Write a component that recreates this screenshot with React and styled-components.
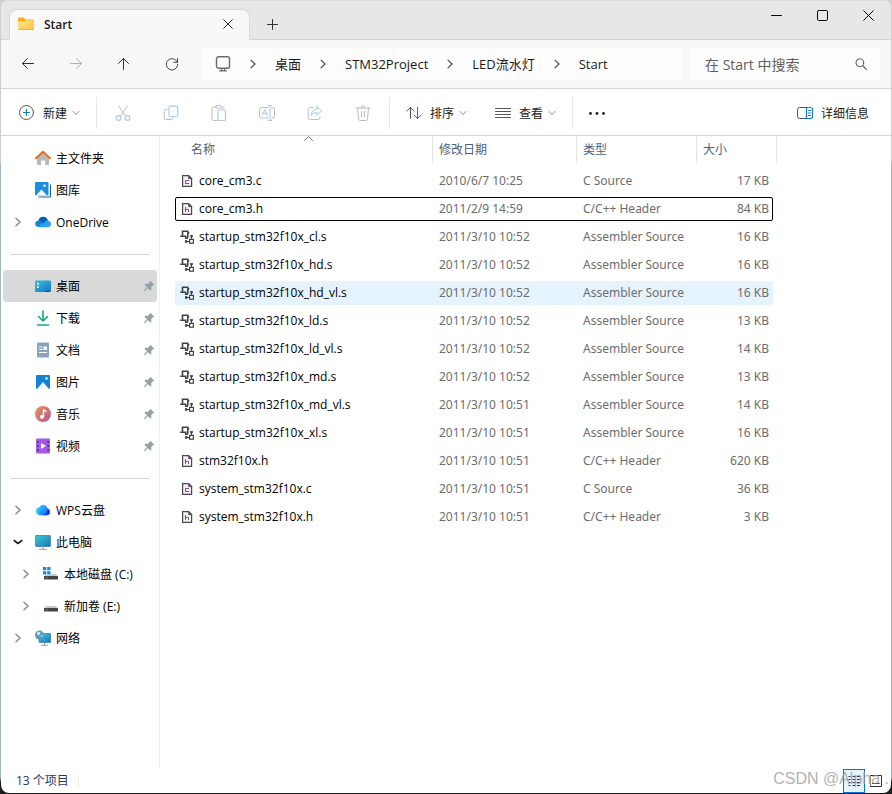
import React, { useState } from "react";
import styled, { createGlobalStyle } from "styled-components";

const files = [
    { name: "core_cm3.c", date: "2010/6/7 10:25", kind: "c", size: "17 KB" },
    { name: "core_cm3.h", date: "2011/2/9 14:59", kind: "h", size: "84 KB" },
    { name: "startup_stm32f10x_cl.s", date: "2011/3/10 10:52", kind: "s", size: "16 KB" },
    { name: "startup_stm32f10x_hd.s", date: "2011/3/10 10:52", kind: "s", size: "16 KB" },
    { name: "startup_stm32f10x_hd_vl.s", date: "2011/3/10 10:52", kind: "s", size: "16 KB" },
    { name: "startup_stm32f10x_ld.s", date: "2011/3/10 10:52", kind: "s", size: "13 KB" },
    { name: "startup_stm32f10x_ld_vl.s", date: "2011/3/10 10:52", kind: "s", size: "14 KB" },
    { name: "startup_stm32f10x_md.s", date: "2011/3/10 10:52", kind: "s", size: "13 KB" },
    { name: "startup_stm32f10x_md_vl.s", date: "2011/3/10 10:51", kind: "s", size: "14 KB" },
    { name: "startup_stm32f10x_xl.s", date: "2011/3/10 10:51", kind: "s", size: "16 KB" },
    { name: "stm32f10x.h", date: "2011/3/10 10:51", kind: "h", size: "620 KB" },
    { name: "system_stm32f10x.c", date: "2011/3/10 10:51", kind: "c", size: "36 KB" },
    { name: "system_stm32f10x.h", date: "2011/3/10 10:51", kind: "h", size: "3 KB" },
];

const kinds = {
    c: "C Source",
    h: "C/C++ Header",
    s: "Assembler Source",
};

/* ---------- icons ---------- */

const Icon = ({ size = 16, color = "#4a4a4a", children }) => (
    <svg
        width={size}
        height={size}
        viewBox={`0 0 ${size} ${size}`}
        fill="none"
        stroke={color}
        strokeLinecap="round"
        strokeLinejoin="round"
        aria-hidden="true"
    >
        {children}
    </svg>
);

const FolderIcon = () => (
    <Icon color="none">
        <defs>
            <linearGradient id="folder" x1="0" y1="0" x2="1" y2="1">
                <stop offset="0" stopColor="#ffe49b" />
                <stop offset="1" stopColor="#fcc638" />
            </linearGradient>
        </defs>
        <path d="M0 3q0-1.500 1.500-1.500h4l2 2h7q1.500 0 1.500 1.500v4H0z" fill="#f2ae18" />
        <path d="M0 5.500h6.500l1.500-1.300h6.800q1.200 0 1.200 1.200v7.400q0 1.200-1.200 1.200H1.200Q0 14 0 12.800z" fill="url(#folder)" />
        <path d="M0.500 13.500h15" stroke="#edb02a" strokeWidth="0.800" />
    </Icon>
);

const CloseIcon = ({ size = 10, color = "#333" }) => (
    <Icon size={size} color={color}>
        <path d={`M0.700 0.700L${size - 0.7} ${size - 0.7}M${size - 0.7} 0.700L0.700 ${size - 0.7}`} />
    </Icon>
);

const PlusIcon = () => (
    <Icon size={11} color="#333">
        <path d="M5.500 0.500v10M0.500 5.500h10" />
    </Icon>
);

const MinimizeIcon = () => (
    <Icon size={11} color="#000">
        <path d="M0.500 5.500h10" />
    </Icon>
);

const MaximizeIcon = () => (
    <Icon size={11} color="#000">
        <rect x="0.500" y="0.500" width="10" height="10" rx="1.200" />
    </Icon>
);

const BackIcon = () => (
    <Icon color="#333">
        <path d="M13.500 7.500H2.500M7.500 2.500l-5 5 5 5" />
    </Icon>
);

const ForwardIcon = () => (
    <Icon color="#b0b0b0">
        <path d="M2.500 7.500h11M8.500 2.500l5 5-5 5" />
    </Icon>
);

const UpIcon = () => (
    <Icon color="#333">
        <path d="M7.500 13.500v-11M2.500 7.500l5-5 5 5" />
    </Icon>
);

const RefreshIcon = () => (
    <Icon color="#444">
        <path d="M13.300 6.200A5.700 5.700 0 1 0 13.700 8.500M13.500 2.500v3.800H9.800" />
    </Icon>
);

const MonitorIcon = () => (
    <Icon color="#6a6a6a">
        <rect x="1.500" y="0.800" width="13" height="11.400" rx="2" strokeWidth="1.400" />
        <path d="M6.500 12.500v2.200M9.500 12.500v2.200M4.500 14.800h7" strokeWidth="1.200" />
    </Icon>
);

const ChevronRight = ({ color = "#444", width = 1.1 }) => (
    <Icon size={10} color={color}>
        <path d="M3 1.200L7 5l-4 3.800" strokeWidth={width} />
    </Icon>
);

const ChevronDown = ({ size = 8, color = "#8a8a8a", width = 1 }) => (
    <Icon size={size} color={color}>
        <path d={`M1.200 ${size / 2 - 1.5}L${size / 2} ${size / 2 + 1.5}L${size - 1.2} ${size / 2 - 1.5}`} strokeWidth={width} />
    </Icon>
);

const SearchIcon = () => (
    <Icon size={12} color="#555">
        <circle cx="4.800" cy="4.800" r="3.900" />
        <path d="M7.700 7.700l3.600 3.600" strokeWidth="1.200" />
    </Icon>
);

const NewIcon = () => (
    <Icon color="#555">
        <circle cx="7.500" cy="7.500" r="7" />
        <path d="M7.500 4.500v6M4.500 7.500h6" stroke="#0f78d4" strokeWidth="1.200" />
    </Icon>
);

const CutIcon = () => (
    <Icon color="#bdbdbd">
        <path d="M3.500 0.800L10 10.500M12.500 0.800L6 10.500" />
        <circle cx="3.500" cy="13" r="2.300" stroke="#a5cbee" strokeWidth="1.200" />
        <circle cx="12.500" cy="13" r="2.300" stroke="#a5cbee" strokeWidth="1.200" />
    </Icon>
);

const CopyIcon = () => (
    <Icon color="#bdbdbd">
        <path d="M4 4.500H3q-1.800 0-1.800 1.800v6.400q0 1.800 1.800 1.800h5q1.800 0 1.800-1.800" />
        <rect x="6" y="1.200" width="8.800" height="10.300" rx="1.800" stroke="#a5cbee" strokeWidth="1.200" />
    </Icon>
);

const PasteIcon = () => (
    <Icon color="#bdbdbd">
        <path d="M5 2H2.500Q1 2 1 3.500v10.500q0 1.500 1.500 1.500H6M10.500 2h1q1.500 0 1.500 1.500V4" />
        <rect x="4.500" y="0.600" width="6" height="2.600" rx="1.200" />
        <rect x="7" y="5" width="7.500" height="10.500" rx="1.200" stroke="#a5cbee" strokeWidth="1.200" />
    </Icon>
);

const RenameIcon = () => (
    <Icon color="#bdbdbd">
        <path d="M9 2.500H2.500Q0.500 2.500 0.500 4.500v6.500q0 2 2 2H9M13 2.500h0.500q2 0 2 2v6.500q0 2-2 2H13" />
        <path d="M3 10.500L5.800 4.500l2.700 6M4 8.500h3.500M11 0.500v15M9.300 0.500h3.400M9.300 15.500h3.400" stroke="#a5cbee" />
    </Icon>
);

const ShareIcon = () => (
    <Icon color="#bdbdbd">
        <path d="M6 2.500H3.500Q1.200 2.500 1.200 4.800v7.400q0 2.300 2.300 2.300h7.300q2.200 0 2.200-2.300V11" />
        <path d="M9.800 1.500l5 4.300-5 4.300V7.500Q6 7.300 4 10.500 4.500 4.500 9.800 4.200z" stroke="#a5cbee" />
    </Icon>
);

const DeleteIcon = () => (
    <Icon color="#bdbdbd">
        <path d="M1 3h14M6 2.800Q6 0.700 8 0.700t2 2.100M2.500 3.200l1 10.600q0.200 1.700 1.800 1.700h5.400q1.600 0 1.800-1.700l1-10.600M6.500 6.500v5.500M9.500 6.500v5.500" />
    </Icon>
);

const SortIcon = () => (
    <Icon color="#555">
        <path d="M4.500 13.500V2.500M0.800 6l3.700-3.500L8.200 6" />
        <path d="M11.500 2.500v11M8 10l3.500 3.500L15.200 10" stroke="#0f78d4" />
    </Icon>
);

const ViewIcon = () => (
    <Icon color="#555">
        <path d="M0.500 3.500h15M0.500 6.500h15M0.500 9.500h15M0.500 12.500h15" />
    </Icon>
);

const MoreIcon = () => (
    <Icon color="none" size={18}>
        <circle cx="2.500" cy="9.500" r="1.400" fill="#222" />
        <circle cx="9" cy="9.500" r="1.400" fill="#222" />
        <circle cx="15.500" cy="9.500" r="1.400" fill="#222" />
    </Icon>
);

const DetailsIcon = () => (
    <Icon color="#555">
        <path d="M9.500 2.500H2.500q-2 0-2 2v7q0 2 2 2h7" />
        <path d="M9.500 2.500h4q2 0 2 2v7q0 2-2 2h-4zM11.500 5.500h2M11.500 8h2M11.500 10.500h2" stroke="#0f78d4" strokeWidth="1.200" />
    </Icon>
);

const HomeIcon = () => (
    <Icon color="none">
        <path d="M2 7.500L8 2l6 5.500V14q0 1-1 1h-2.700v-4.500H6V15H3q-1 0-1-1z" fill="#b9b9b9" />
        <path d="M1 8.200L8 1.700l7 6.500" stroke="#e2701f" strokeWidth="2" />
    </Icon>
);

const GalleryIcon = () => (
    <Icon color="none">
        <path d="M4 15h10.500q1 0 1-1V3" stroke="#1464b4" strokeWidth="1.200" />
        <rect x="0" y="0" width="13.500" height="13.500" rx="1.200" fill="#1b8ddf" />
        <path d="M1 13.500l5.500-6 5.500 6z" fill="#fff" />
        <circle cx="9.500" cy="3.800" r="1.200" fill="#fff" />
    </Icon>
);

const OneDriveIcon = () => (
    <Icon color="none">
        <path d="M3 8Q3.800 2.500 8.500 2.800 12 3 13 6.500L8 10z" fill="#0f5fb8" />
        <path d="M3.500 13Q0 12.500 0.200 9.500 0.800 6.500 4.200 6.400 6 6.400 11 13z" fill="#1681d8" />
        <path d="M5 13.200Q3.500 12.900 3 12.500L10 8q1-2 3-1.300 3 0.700 3 3.500-0.300 3-3.500 3z" fill="#27a2ee" />
    </Icon>
);

const DesktopIcon = () => (
    <Icon color="none">
        <defs>
            <linearGradient id="screen" x1="0" y1="0" x2="1" y2="1">
                <stop offset="0" stopColor="#37c3d8" />
                <stop offset="1" stopColor="#1273c6" />
            </linearGradient>
        </defs>
        <rect x="0" y="2.500" width="16" height="11.500" rx="1" fill="url(#screen)" />
        <path d="M2 5h1.800v1.800H2zM2 8.200h1.800V10H2z" fill="#fff" />
        <path d="M11 13.500h1M13 13.500h1" stroke="#173e74" />
    </Icon>
);

const DownloadIcon = () => (
    <Icon color="#1ba784">
        <path d="M8 1v9.500M3.500 6.500L8 11l4.500-4.500M2.500 15h11" strokeWidth="1.600" />
    </Icon>
);

const DocumentIcon = () => (
    <Icon color="none">
        <rect x="2" y="0.500" width="12" height="15" rx="1" fill="#8aa4bd" />
        <path d="M4 5h3.500M4 7.500h3.500M4 10.500h8" stroke="#fff" strokeLinecap="butt" />
        <rect x="8.500" y="4.500" width="3.500" height="3.500" fill="#fff" />
    </Icon>
);

const PictureIcon = () => (
    <Icon color="none">
        <rect x="1" y="1" width="14" height="14" rx="1.200" fill="#1283d6" />
        <path d="M2 15l6-7 6 7z" fill="#fff" />
        <circle cx="11.500" cy="4.500" r="1.200" fill="#fff" />
    </Icon>
);

const MusicIcon = () => (
    <Icon color="none">
        <defs>
            <linearGradient id="music" x1="0" y1="0" x2="1" y2="1">
                <stop offset="0.100" stopColor="#ec8b57" />
                <stop offset="1" stopColor="#a8589c" />
            </linearGradient>
        </defs>
        <circle cx="8" cy="8" r="8" fill="url(#music)" />
        <path d="M8.500 10.500V4l2.500 1.200" stroke="#fff" strokeWidth="1.400" />
        <circle cx="7" cy="10.700" r="2" fill="#fff" />
    </Icon>
);

const VideoIcon = () => (
    <Icon color="none">
        <rect x="1" y="0.500" width="14" height="15" rx="1" fill="#a259e6" />
        <path d="M2.800 3v10.500M13.200 3v10.500" stroke="#4b2272" strokeWidth="1.600" strokeDasharray="1.500 2.800" strokeLinecap="butt" />
        <path d="M6 5l5 3-5 3z" fill="#fff" />
    </Icon>
);

const WpsIcon = () => (
    <Icon color="none">
        <defs>
            <linearGradient id="wps" x1="0" y1="0" x2="1" y2="1">
                <stop offset="0.200" stopColor="#2bb4fb" />
                <stop offset="1" stopColor="#1659ee" />
            </linearGradient>
        </defs>
        <circle cx="5" cy="9.300" r="4" fill="#2bd0f2" />
        <path d="M4.500 13.300Q2.500 7.500 5 4.500 7.500 1.800 10.500 3.500q1.500 1 2 3 2.500 0.800 2.500 3.500-0.300 3.300-3.500 3.300z" fill="url(#wps)" />
        <path d="M7 13.300Q11.500 12.500 12.500 6.500q2.500 0.800 2.500 3.500-0.300 3.300-3.500 3.300z" fill="#1a3fe4" />
    </Icon>
);

const ComputerIcon = () => (
    <Icon color="none">
        <defs>
            <linearGradient id="pc" x1="0" y1="0" x2="1" y2="1">
                <stop offset="0" stopColor="#3fcbd3" />
                <stop offset="1" stopColor="#1576be" />
            </linearGradient>
        </defs>
        <rect x="0.500" y="1.500" width="15" height="11" rx="0.800" fill="url(#pc)" stroke="#23688f" strokeWidth="0.600" />
        <path d="M8 13v2M4.500 15.300h7" stroke="#8f9ca5" />
    </Icon>
);

const DriveIcon = ({ system }) => (
    <Icon color="none">
        <path d="M3 8h10l2 2.500H1z" fill="#c9c9c9" />
        <rect x="1" y="10" width="14" height="3.500" rx="0.600" fill="#434343" />
        <rect x="3" y="11.300" width="1.400" height="1" fill="#4ee05b" />
        {system && (
            <>
                <rect x="0" y="1" width="8" height="8" fill="#fff" />
                <path d="M0 1h3.300v3.300H0zM4.200 1h3.300v3.300H4.200zM0 5.200h3.300v3.300H0zM4.200 5.200h3.300v3.300H4.200z" fill="#1688d8" />
            </>
        )}
    </Icon>
);

const NetworkIcon = () => (
    <Icon color="none">
        <rect x="4" y="3.500" width="11.700" height="9" rx="0.600" fill="url(#pc)" stroke="#1a73ad" strokeWidth="0.600" />
        <path d="M9.500 13v2M6.500 15.300h6" stroke="#8f9ca5" />
        <circle cx="4.500" cy="5" r="4.500" fill="#5b9bbd" />
        <path d="M2 2.500q2-1.500 3.500 0L4.500 5 2.500 5.500zM6 5l2 0.500-1.500 2z" fill="#cfe5ee" />
    </Icon>
);

const PinIcon = () => (
    <Icon size={12} color="none">
        <path d="M7.300 0.800l3.900 3.900-1.200 0.600-1.800 1.900 0.200 2.300-1.200 1-2.400-2.400L1.600 11.300 0.700 10.400 3.900 7.200 1.500 4.800l1-1.200 2.400 0.300 1.800-1.900z" fill="#93a0a7" />
    </Icon>
);

const SourceIcon = ({ letter }) => (
    <Icon size={14} color="#4a4a4a">
        <path d="M2.600 1.600h6l3 3v7.800h-9z" fill="#f3f0f4" strokeWidth="1.200" strokeLinejoin="miter" />
        <path d="M8.500 1.500v3.200h3.200z" fill="#4a4a4a" strokeWidth="0.500" />
        {letter === "c" ? (
            <path d="M9 6.500H5.500v3H9" stroke="#94439c" strokeLinecap="butt" strokeLinejoin="miter" />
        ) : (
            <path d="M5.500 5v5M5.500 7.500h3V10" stroke="#94439c" strokeLinecap="butt" strokeLinejoin="miter" />
        )}
    </Icon>
);

const AssemblerIcon = () => (
    <Icon size={14} color="#424242">
        <path d="M2.500 6V1.200h5.300v6.500M0.300 6.300h5.400v2H8" strokeWidth="1.600" strokeLinecap="butt" strokeLinejoin="miter" />
        <path d="M7.800 2.800h1.500" strokeWidth="1.400" strokeLinecap="butt" />
        <path d="M11.500 6v3M9.500 11.500H6" strokeWidth="1.200" strokeLinecap="butt" />
        <rect x="10.200" y="5" width="2.600" height="2.200" fill="#424242" stroke="none" />
        <rect x="5" y="10.200" width="2.400" height="2.600" fill="#424242" stroke="none" />
        <rect x="9.600" y="9.400" width="3.800" height="3.800" fill="#fff" strokeWidth="1.200" strokeLinejoin="miter" />
    </Icon>
);

const ListViewIcon = () => (
    <Icon size={12} color="#333">
        <path d="M0.500 1.500h2M4.500 1.500h3M9 1.500h3M0.500 4.500h2M4.500 4.500h3M9 4.500h3M0.500 7.500h2M4.500 7.500h3M9 7.500h3M0.500 10.500h2M4.500 10.500h3M9 10.500h3" strokeLinecap="butt" />
    </Icon>
);

const TileViewIcon = () => (
    <Icon size={12} color="#333">
        <path d="M0.500 0.500h11v11h-11zM2.500 8.500h7" strokeLinejoin="miter" />
    </Icon>
);

/* ---------- page ---------- */

const quickAccess = [
    { label: "桌面", icon: <DesktopIcon /> },
    { label: "下载", icon: <DownloadIcon /> },
    { label: "文档", icon: <DocumentIcon /> },
    { label: "图片", icon: <PictureIcon /> },
    { label: "音乐", icon: <MusicIcon /> },
    { label: "视频", icon: <VideoIcon /> },
];

const disabledTools = [
    { label: "剪切", icon: <CutIcon /> },
    { label: "复制", icon: <CopyIcon /> },
    { label: "粘贴", icon: <PasteIcon /> },
    { label: "重命名", icon: <RenameIcon /> },
    { label: "共享", icon: <ShareIcon /> },
    { label: "删除", icon: <DeleteIcon /> },
];

const crumbs = ["桌面", "STM32Project", "LED流水灯", "Start"];

function TreeItem({ label, icon, arrow, open, nested, pinned, active, onClick }) {
    return (
        <TreeButton $nested={nested} $active={active} onClick={onClick}>
            <span className="arrow">
                {open && <ChevronDown size={10} color="#222" width={1.6} />}
                {arrow && <ChevronRight color="#8a8a8a" width={1.5} />}
            </span>
            {icon}
            <span className="label">{label}</span>
            {pinned && <PinIcon />}
        </TreeButton>
    );
}

function App() {
    const [place, setPlace] = useState("桌面");
    const [focused, setFocused] = useState("core_cm3.h");
    const [search, setSearch] = useState("");

    return (
        <>
            <GlobalStyle />
            <Desktop>
                <Window>
                    <TitleBar>
                        <Tab>
                            <FolderIcon />
                            <span>Start</span>
                            <TabButton aria-label="关闭标签页">
                                <CloseIcon />
                            </TabButton>
                        </Tab>
                        <NewTab aria-label="新建标签页">
                            <PlusIcon />
                        </NewTab>
                        <Controls>
                            <button aria-label="最小化">
                                <MinimizeIcon />
                            </button>
                            <button aria-label="最大化">
                                <MaximizeIcon />
                            </button>
                            <button aria-label="关闭">
                                <CloseIcon size={11} color="#000" />
                            </button>
                        </Controls>
                    </TitleBar>

                    <NavBar>
                        <NavButtons>
                            <IconButton aria-label="后退">
                                <BackIcon />
                            </IconButton>
                            <IconButton aria-label="前进" disabled>
                                <ForwardIcon />
                            </IconButton>
                            <IconButton aria-label="向上">
                                <UpIcon />
                            </IconButton>
                            <IconButton aria-label="刷新">
                                <RefreshIcon />
                            </IconButton>
                        </NavButtons>
                        <Address>
                            <MonitorIcon />
                            {crumbs.map((crumb) => (
                                <React.Fragment key={crumb}>
                                    <ChevronRight />
                                    <Crumb href="#">{crumb}</Crumb>
                                </React.Fragment>
                            ))}
                        </Address>
                        <SearchBox>
                            <input
                                aria-label="搜索"
                                placeholder="在 Start 中搜索"
                                value={search}
                                onChange={(e) => setSearch(e.target.value)}
                            />
                            <SearchIcon />
                        </SearchBox>
                    </NavBar>

                    <ToolBar>
                        <ToolGroup $padding={8}>
                            <ToolButton>
                                <NewIcon />
                                <span>新建</span>
                                <ChevronDown />
                            </ToolButton>
                        </ToolGroup>
                        <ToolGroup $padding={2}>
                            {disabledTools.map((tool) => (
                                <IconButton key={tool.label} aria-label={tool.label} disabled>
                                    {tool.icon}
                                </IconButton>
                            ))}
                        </ToolGroup>
                        <ToolGroup $padding={8} $gap={12}>
                            <ToolButton>
                                <SortIcon />
                                <span>排序</span>
                                <ChevronDown />
                            </ToolButton>
                            <ToolButton>
                                <ViewIcon />
                                <span>查看</span>
                                <ChevronDown />
                            </ToolButton>
                        </ToolGroup>
                        <IconButton aria-label="更多">
                            <MoreIcon />
                        </IconButton>
                        <ToolButton className="details">
                            <DetailsIcon />
                            <span>详细信息</span>
                        </ToolButton>
                    </ToolBar>

                    <Body>
                        <SideBar>
                            <TreeItem label="主文件夹" icon={<HomeIcon />} />
                            <TreeItem label="图库" icon={<GalleryIcon />} />
                            <TreeItem label="OneDrive" icon={<OneDriveIcon />} arrow />
                            <Divider />
                            {quickAccess.map((item) => (
                                <TreeItem
                                    key={item.label}
                                    label={item.label}
                                    icon={item.icon}
                                    active={place === item.label}
                                    onClick={() => setPlace(item.label)}
                                    pinned
                                />
                            ))}
                            <Divider />
                            <TreeItem label="WPS云盘" icon={<WpsIcon />} arrow />
                            <TreeItem label="此电脑" icon={<ComputerIcon />} open />
                            <TreeItem label="本地磁盘 (C:)" icon={<DriveIcon system />} arrow nested />
                            <TreeItem label="新加卷 (E:)" icon={<DriveIcon />} arrow nested />
                            <TreeItem label="网络" icon={<NetworkIcon />} arrow />
                        </SideBar>

                        <FileTable>
                            <thead>
                                <HeadRow>
                                    <th>
                                        名称
                                        <SortMark>
                                            <Icon size={9} color="#777">
                                                <path d="M0.500 6.500l4-4 4 4" />
                                            </Icon>
                                        </SortMark>
                                    </th>
                                    <th>修改日期</th>
                                    <th>类型</th>
                                    <th>大小</th>
                                </HeadRow>
                            </thead>
                            <tbody>
                                {files.map((file) => (
                                    <FileRow
                                        key={file.name}
                                        $focused={focused === file.name}
                                        $hovered={file.name === "startup_stm32f10x_hd_vl.s"}
                                        onClick={() => setFocused(file.name)}
                                    >
                                        <td className="name">
                                            {file.kind === "s" ? <AssemblerIcon /> : <SourceIcon letter={file.kind} />}
                                            {file.name}
                                        </td>
                                        <td>{file.date}</td>
                                        <td>{kinds[file.kind]}</td>
                                        <td className="size">{file.size}</td>
                                    </FileRow>
                                ))}
                            </tbody>
                        </FileTable>
                    </Body>

                    <StatusBar>
                        <span className="count">13 个项目</span>
                        <ViewButton $active aria-label="详细信息视图">
                            <ListViewIcon />
                        </ViewButton>
                        <ViewButton aria-label="大缩略图视图">
                            <TileViewIcon />
                        </ViewButton>
                        <Watermark>CSDN @Alpha .</Watermark>
                    </StatusBar>
                </Window>
            </Desktop>
        </>
    );
}

export default App;

const GlobalStyle = createGlobalStyle`
    * {
        box-sizing: border-box;
    }

    body {
        margin: 0;
        font-family: "Open Sans", "Noto Sans CJK SC", sans-serif;
        font-size: 12px;
        color: #1a1a1a;
    }

    button {
        display: flex;
        align-items: center;
        justify-content: center;
        padding: 0;
        border: none;
        background: transparent;
        font: inherit;
        color: inherit;
    }

    svg {
        flex-shrink: 0;
    }
`;

const Desktop = styled.div`
    display: flex;
    min-height: 100vh;
    padding: 0 1px 1px;
    background: linear-gradient(
        #cfcfcf 163px,
        #9fb5bf 163px,
        #9fb5bf calc(100% - 16px),
        #1c1c1c calc(100% - 12px)
    );
`;

const Window = styled.div`
    flex: 1;
    min-width: 0;
    display: flex;
    flex-direction: column;
    background: #ffffff;
    border-radius: 8px;
    overflow: hidden;
`;

const TitleBar = styled.div`
    display: flex;
    height: 40px;
    padding-left: 8px;
    background: #e7e7e7;
    border-top: 1px solid #dcdcdc;
    box-shadow: inset 0 -1px #d4d4d4;
`;

const Tab = styled.div`
    display: flex;
    align-items: center;
    width: 241px;
    margin-top: 8px;
    padding: 0 11px 2px 8px;
    background: #f8f8f8;
    border: 1px solid #d9d9d9;
    border-bottom: none;
    border-radius: 8px 8px 0 0;
    font-weight: 600;

    span {
        flex: 1;
        margin-left: 10px;
    }
`;

const TabButton = styled.button`
    width: 20px;
    height: 20px;
`;

const NewTab = styled.button`
    width: 44px;
    margin-top: 8px;
`;

const Controls = styled.div`
    display: flex;
    margin-left: auto;

    button {
        width: 46px;
        height: 28px;
    }
`;

const NavBar = styled.div`
    display: flex;
    align-items: center;
    height: 49px;
    padding: 0 11px 0 3px;
    background: #f7f7f7;
    border-bottom: 1px solid #d5d5d5;
`;

const NavButtons = styled.div`
    display: flex;
    margin-right: 6px;
`;

const IconButton = styled.button`
    width: 48px;
    height: 32px;
`;

const Address = styled.nav`
    flex: 1;
    display: flex;
    align-items: center;
    gap: 17px;
    height: 32px;
    padding: 0 13px;
    background: #fdfdfd;
    border-radius: 5px;
`;

const Crumb = styled.a`
    font-size: 13px;
    line-height: 20px;
    color: #1a1a1a;
    text-decoration: none;
    white-space: nowrap;
`;

const SearchBox = styled.div`
    display: flex;
    align-items: center;
    width: 190px;
    height: 32px;
    margin-left: 8px;
    padding: 0 13px 0 15px;
    background: #fdfdfd;
    border-radius: 5px;

    input {
        flex: 1;
        min-width: 0;
        padding: 0;
        border: none;
        outline: none;
        background: transparent;
        font: inherit;
        font-size: 14px;
    }

    input::placeholder {
        color: #606060;
        opacity: 1;
    }
`;

const ToolBar = styled.div`
    display: flex;
    align-items: center;
    height: 47px;
    padding: 1px 14px 0 2px;
    border-bottom: 1px solid #d5d5d5;

    .details {
        margin-left: auto;
    }
`;

const ToolGroup = styled.div`
    display: flex;
    align-items: center;
    gap: ${(props) => props.$gap || 0}px;
    height: 32px;
    padding: 0 ${(props) => props.$padding}px;
    border-right: 1px solid #e8e8e8;
`;

const ToolButton = styled.button`
    height: 32px;
    padding: 0 8px;
    white-space: nowrap;

    span {
        margin-left: 8px;
    }

    span + svg {
        margin-left: 5px;
    }
`;

const Body = styled.div`
    flex: 1;
    display: flex;
`;

const SideBar = styled.nav`
    width: 159px;
    flex-shrink: 0;
    padding: 6px 2px 0;
    border-right: 1px solid #f1f1f1;
`;

const TreeButton = styled.button`
    width: 100%;
    height: 32px;
    justify-content: flex-start;
    padding: 0 2px 0 ${(props) => (props.$nested ? 18 : 10)}px;
    border-radius: 3px;
    background: ${(props) => (props.$active ? "#d9d9d9" : "transparent")};
    color: #000;
    text-align: left;

    .arrow {
        display: flex;
        width: 22px;
    }

    .label {
        flex: 1;
        margin-left: 5px;
        white-space: nowrap;
    }
`;

const Divider = styled.hr`
    height: 1px;
    margin: 16px 8px 15px;
    border: none;
    background: #d2d2d2;
`;

const FileTable = styled.table`
    align-self: flex-start;
    display: block;
    padding: 0 15px;
    border-spacing: 0;
`;

const HeadRow = styled.tr`
    display: grid;
    grid-template-columns: 258px 144px 120px 80px;
    height: 27px;
    margin-bottom: 2px;

    th {
        position: relative;
        padding: 0 6px;
        border-right: 1px solid #e3e3e3;
        font-weight: 400;
        line-height: 27px;
        text-align: left;
        color: #4c5f7c;
    }

    th:first-child {
        padding-left: 16px;
    }
`;

const SortMark = styled.span`
    position: absolute;
    top: -2px;
    left: 50%;
    display: flex;
`;

const FileRow = styled.tr`
    display: grid;
    grid-template-columns: 258px 144px 120px 76px;
    width: 598px;
    height: 24px;
    margin: 4px 0;
    border-radius: 2px;
    background: ${(props) => (props.$hovered ? "#e5f3ff" : "transparent")};
    outline: ${(props) => (props.$focused ? "1px solid #000" : "none")};
    outline-offset: -1px;
    color: #6d6d6d;
    font-family: "Noto Sans", "Noto Sans CJK SC", sans-serif;

    td {
        padding: 0 6px;
        line-height: 24px;
        white-space: nowrap;
    }

    .name {
        display: flex;
        align-items: center;
        gap: 5px;
        padding-left: 5px;
        color: #000;
        font-family: "Open Sans", "Noto Sans CJK SC", sans-serif;
    }

    .size {
        padding-right: 4px;
        text-align: right;
    }
`;

const StatusBar = styled.div`
    position: relative;
    display: flex;
    align-items: center;
    height: 24px;
    padding: 0 4px 0 15px;
    color: #1f3a63;

    .count {
        margin-right: auto;
        padding-right: 9px;
        border-right: 1px solid #eeeeee;
        line-height: 12px;
    }
`;

const ViewButton = styled.button`
    width: 22px;
    height: 24px;
    background: ${(props) => (props.$active ? "#e5f3fd" : "transparent")};
    border: ${(props) => (props.$active ? "1px solid #0078d7" : "none")};
`;

const Watermark = styled.span`
    position: absolute;
    right: 2px;
    bottom: 4px;
    font-family: "Liberation Sans", Arial, sans-serif;
    font-size: 16px;
    line-height: 20px;
    color: rgba(150, 150, 150, 0.75);
    pointer-events: none;
`;
